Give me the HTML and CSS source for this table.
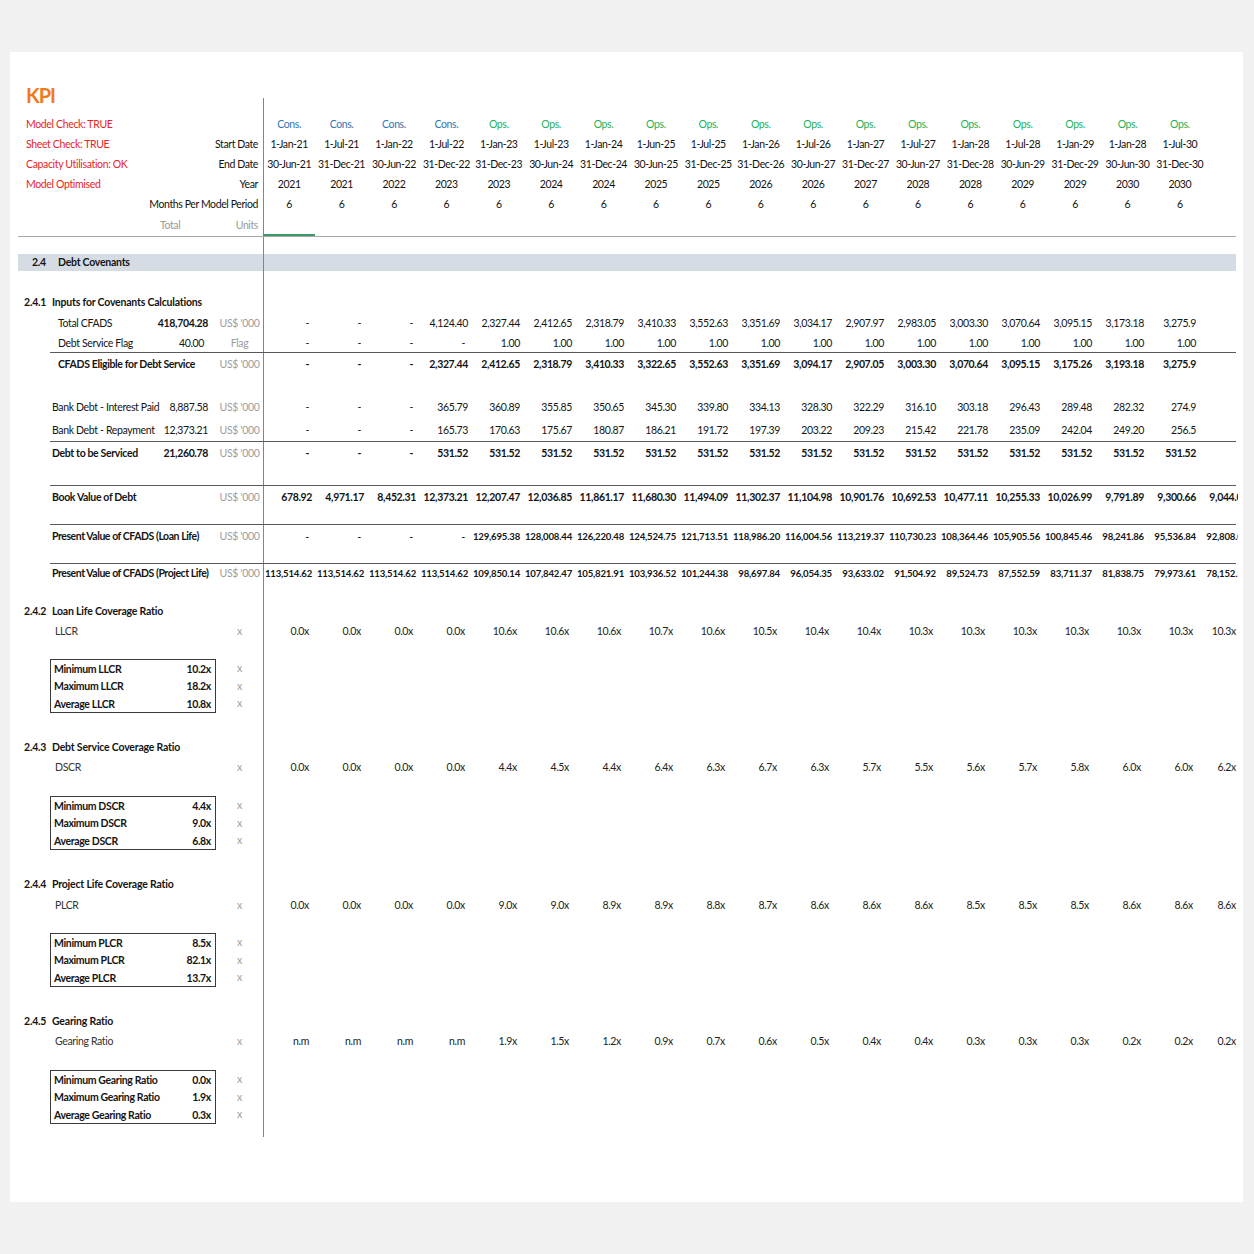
FILE: index.html
```html
<!DOCTYPE html>
<html>
<head>
<meta charset="utf-8">
<title>KPI</title>
<link rel="stylesheet" href="styles.css">
</head>
<body>
<div class="panel">
<div class="sheet">

<div class="title">KPI</div>

<div class="hrow">
  <div class="hleft"><span class="chk">Model Check: TRUE</span><span></span></div>
  <div class="hc c">Cons.</div><div class="hc c">Cons.</div><div class="hc c">Cons.</div><div class="hc c">Cons.</div>
  <div class="hc o">Ops.</div><div class="hc o">Ops.</div><div class="hc o">Ops.</div><div class="hc o">Ops.</div><div class="hc o">Ops.</div><div class="hc o">Ops.</div><div class="hc o">Ops.</div>
  <div class="hc o">Ops.</div><div class="hc o">Ops.</div><div class="hc o">Ops.</div><div class="hc o">Ops.</div><div class="hc o">Ops.</div><div class="hc o">Ops.</div><div class="hc o">Ops.</div>
</div>
<div class="hrow">
  <div class="hleft"><span class="chk">Sheet Check: TRUE</span><span>Start Date</span></div>
  <div class="hc">1-Jan-21</div><div class="hc">1-Jul-21</div><div class="hc">1-Jan-22</div><div class="hc">1-Jul-22</div>
  <div class="hc">1-Jan-23</div><div class="hc">1-Jul-23</div><div class="hc">1-Jan-24</div><div class="hc">1-Jun-25</div><div class="hc">1-Jul-25</div><div class="hc">1-Jan-26</div><div class="hc">1-Jul-26</div>
  <div class="hc">1-Jan-27</div><div class="hc">1-Jul-27</div><div class="hc">1-Jan-28</div><div class="hc">1-Jul-28</div><div class="hc">1-Jan-29</div><div class="hc">1-Jan-28</div><div class="hc">1-Jul-30</div>
</div>
<div class="hrow">
  <div class="hleft"><span class="chk">Capacity Utilisation: OK</span><span>End Date</span></div>
  <div class="hc">30-Jun-21</div><div class="hc">31-Dec-21</div><div class="hc">30-Jun-22</div><div class="hc">31-Dec-22</div>
  <div class="hc">31-Dec-23</div><div class="hc">30-Jun-24</div><div class="hc">31-Dec-24</div><div class="hc">30-Jun-25</div><div class="hc">31-Dec-25</div><div class="hc">31-Dec-26</div><div class="hc">30-Jun-27</div>
  <div class="hc">31-Dec-27</div><div class="hc">30-Jun-27</div><div class="hc">31-Dec-28</div><div class="hc">30-Jun-29</div><div class="hc">31-Dec-29</div><div class="hc">30-Jun-30</div><div class="hc">31-Dec-30</div>
</div>
<div class="hrow">
  <div class="hleft"><span class="chk">Model Optimised</span><span>Year</span></div>
  <div class="hc">2021</div><div class="hc">2021</div><div class="hc">2022</div><div class="hc">2023</div>
  <div class="hc">2023</div><div class="hc">2024</div><div class="hc">2024</div><div class="hc">2025</div><div class="hc">2025</div><div class="hc">2026</div><div class="hc">2026</div>
  <div class="hc">2027</div><div class="hc">2028</div><div class="hc">2028</div><div class="hc">2029</div><div class="hc">2029</div><div class="hc">2030</div><div class="hc">2030</div>
</div>
<div class="hrow">
  <div class="hleft"><span></span><span>Months Per Model Period</span></div>
  <div class="hc">6</div><div class="hc">6</div><div class="hc">6</div><div class="hc">6</div><div class="hc">6</div><div class="hc">6</div><div class="hc">6</div><div class="hc">6</div><div class="hc">6</div>
  <div class="hc">6</div><div class="hc">6</div><div class="hc">6</div><div class="hc">6</div><div class="hc">6</div><div class="hc">6</div><div class="hc">6</div><div class="hc">6</div><div class="hc">6</div>
</div>
<div class="hrow tu">
  <div class="hleft"><span class="tl">Total</span><span class="ul">Units</span></div>
  <div class="hc first"></div>
</div>
<div class="rule top"></div>

<div class="h17"></div>
<div class="bar"><span class="num">2.4</span>Debt Covenants</div>
<div class="h20"></div>

<div class="head h21"><span class="num">2.4.1</span>Inputs for Covenants Calculations</div>

<div class="row h21">
  <div class="lab in">Total CFADS</div><div class="tot b">418,704.28</div><div class="u">US$ '000</div>
  <div class="v d">-</div><div class="v d">-</div><div class="v d">-</div>
  <div class="v">4,124.40</div><div class="v">2,327.44</div><div class="v">2,412.65</div><div class="v">2,318.79</div><div class="v">3,410.33</div><div class="v">3,552.63</div><div class="v">3,351.69</div><div class="v">3,034.17</div>
  <div class="v">2,907.97</div><div class="v">2,983.05</div><div class="v">3,003.30</div><div class="v">3,070.64</div><div class="v">3,095.15</div><div class="v">3,173.18</div><div class="v">3,275.9</div>
</div>
<div class="row h19">
  <div class="lab in">Debt Service Flag</div><div class="tot t2">40.00</div><div class="u">Flag</div>
  <div class="v d">-</div><div class="v d">-</div><div class="v d">-</div><div class="v d">-</div>
  <div class="v">1.00</div><div class="v">1.00</div><div class="v">1.00</div><div class="v">1.00</div><div class="v">1.00</div><div class="v">1.00</div><div class="v">1.00</div>
  <div class="v">1.00</div><div class="v">1.00</div><div class="v">1.00</div><div class="v">1.00</div><div class="v">1.00</div><div class="v">1.00</div><div class="v">1.00</div>
</div>
<div class="rule"></div>
<div class="row h22 b">
  <div class="lab in">CFADS Eligible for Debt Service</div><div class="tot"></div><div class="u">US$ '000</div>
  <div class="v d">-</div><div class="v d">-</div><div class="v d">-</div>
  <div class="v">2,327.44</div><div class="v">2,412.65</div><div class="v">2,318.79</div><div class="v">3,410.33</div><div class="v">3,322.65</div><div class="v">3,552.63</div><div class="v">3,351.69</div><div class="v">3,094.17</div>
  <div class="v">2,907.05</div><div class="v">3,003.30</div><div class="v">3,070.64</div><div class="v">3,095.15</div><div class="v">3,175.26</div><div class="v">3,193.18</div><div class="v">3,275.9</div>
</div>

<div class="h21"></div>

<div class="row h22">
  <div class="lab">Bank Debt - Interest Paid</div><div class="tot">8,887.58</div><div class="u">US$ '000</div>
  <div class="v d">-</div><div class="v d">-</div><div class="v d">-</div>
  <div class="v">365.79</div><div class="v">360.89</div><div class="v">355.85</div><div class="v">350.65</div><div class="v">345.30</div><div class="v">339.80</div><div class="v">334.13</div><div class="v">328.30</div>
  <div class="v">322.29</div><div class="v">316.10</div><div class="v">303.18</div><div class="v">296.43</div><div class="v">289.48</div><div class="v">282.32</div><div class="v">274.9</div>
</div>
<div class="row h23">
  <div class="lab">Bank Debt - Repayment</div><div class="tot">12,373.21</div><div class="u">US$ '000</div>
  <div class="v d">-</div><div class="v d">-</div><div class="v d">-</div>
  <div class="v">165.73</div><div class="v">170.63</div><div class="v">175.67</div><div class="v">180.87</div><div class="v">186.21</div><div class="v">191.72</div><div class="v">197.39</div><div class="v">203.22</div>
  <div class="v">209.23</div><div class="v">215.42</div><div class="v">221.78</div><div class="v">235.09</div><div class="v">242.04</div><div class="v">249.20</div><div class="v">256.5</div>
</div>
<div class="rule"></div>
<div class="row h22 b">
  <div class="lab">Debt to be Serviced</div><div class="tot">21,260.78</div><div class="u">US$ '000</div>
  <div class="v d">-</div><div class="v d">-</div><div class="v d">-</div>
  <div class="v">531.52</div><div class="v">531.52</div><div class="v">531.52</div><div class="v">531.52</div><div class="v">531.52</div><div class="v">531.52</div><div class="v">531.52</div><div class="v">531.52</div>
  <div class="v">531.52</div><div class="v">531.52</div><div class="v">531.52</div><div class="v">531.52</div><div class="v">531.52</div><div class="v">531.52</div><div class="v">531.52</div>
</div>

<div class="h21"></div>
<div class="rule"></div>
<div class="row h22 b">
  <div class="lab">Book Value of Debt</div><div class="tot"></div><div class="u">US$ '000</div>
  <div class="v">678.92</div><div class="v">4,971.17</div><div class="v">8,452.31</div><div class="v">12,373.21</div><div class="v">12,207.47</div><div class="v">12,036.85</div><div class="v">11,861.17</div><div class="v">11,680.30</div><div class="v">11,494.09</div><div class="v">11,302.37</div>
  <div class="v">11,104.98</div><div class="v">10,901.76</div><div class="v">10,692.53</div><div class="v">10,477.11</div><div class="v">10,255.33</div><div class="v">10,026.99</div><div class="v">9,791.89</div><div class="v">9,300.66</div><div class="v">9,044.04</div>
</div>

<div class="h16"></div>
<div class="rule"></div>
<div class="row h22 b sm">
  <div class="lab">Present Value of CFADS (Loan Life)</div><div class="tot"></div><div class="u">US$ '000</div>
  <div class="v d">-</div><div class="v d">-</div><div class="v d">-</div><div class="v d">-</div>
  <div class="v">129,695.38</div><div class="v">128,008.44</div><div class="v">126,220.48</div><div class="v">124,524.75</div><div class="v">121,713.51</div><div class="v">118,986.20</div><div class="v">116,004.56</div><div class="v">113,219.37</div>
  <div class="v">110,730.23</div><div class="v">108,364.46</div><div class="v">105,905.56</div><div class="v">100,845.46</div><div class="v">98,241.86</div><div class="v">95,536.84</div><div class="v">92,808.07</div>
</div>

<div class="h16"></div>
<div class="rule"></div>
<div class="row h18 b sm">
  <div class="lab">Present Value of CFADS (Project Life)</div><div class="tot"></div><div class="u">US$ '000</div>
  <div class="v">113,514.62</div><div class="v">113,514.62</div><div class="v">113,514.62</div><div class="v">113,514.62</div>
  <div class="v">109,850.14</div><div class="v">107,842.47</div><div class="v">105,821.91</div><div class="v">103,936.52</div><div class="v">101,244.38</div><div class="v">98,697.84</div><div class="v">96,054.35</div><div class="v">93,633.02</div>
  <div class="v">91,504.92</div><div class="v">89,524.73</div><div class="v">87,552.59</div><div class="v">83,711.37</div><div class="v">81,838.75</div><div class="v">79,973.61</div><div class="v">78,152.59</div>
</div>

<div class="h19"></div>

<div class="head h20"><span class="num">2.4.2</span>Loan Life Coverage Ratio</div>
<div class="row h20 rt">
  <div class="lab r">LLCR</div><div class="tot"></div><div class="u">x</div>
  <div class="v">0.0x</div><div class="v">0.0x</div><div class="v">0.0x</div><div class="v">0.0x</div><div class="v">10.6x</div><div class="v">10.6x</div><div class="v">10.6x</div><div class="v">10.7x</div><div class="v">10.6x</div><div class="v">10.5x</div>
  <div class="v">10.4x</div><div class="v">10.4x</div><div class="v">10.3x</div><div class="v">10.3x</div><div class="v">10.3x</div><div class="v">10.3x</div><div class="v">10.3x</div><div class="v">10.3x</div><div class="v">10.3x</div>
</div>
<div class="h18"></div>
<div class="boxrow">
  <div class="box">
    <div><span>Minimum LLCR</span><span>10.2x</span></div>
    <div class="mid"><span>Maximum LLCR</span><span>18.2x</span></div>
    <div><span>Average LLCR</span><span>10.8x</span></div>
  </div>
  <div class="ux"><div>x</div><div class="mid">x</div><div>x</div></div>
</div>
<div class="h24"></div>

<div class="head h20"><span class="num">2.4.3</span>Debt Service Coverage Ratio</div>
<div class="row h20 rt">
  <div class="lab r">DSCR</div><div class="tot"></div><div class="u">x</div>
  <div class="v">0.0x</div><div class="v">0.0x</div><div class="v">0.0x</div><div class="v">0.0x</div><div class="v">4.4x</div><div class="v">4.5x</div><div class="v">4.4x</div><div class="v">6.4x</div><div class="v">6.3x</div><div class="v">6.7x</div>
  <div class="v">6.3x</div><div class="v">5.7x</div><div class="v">5.5x</div><div class="v">5.6x</div><div class="v">5.7x</div><div class="v">5.8x</div><div class="v">6.0x</div><div class="v">6.0x</div><div class="v">6.2x</div>
</div>
<div class="h19"></div>
<div class="boxrow">
  <div class="box">
    <div><span>Minimum DSCR</span><span>4.4x</span></div>
    <div class="mid"><span>Maximum DSCR</span><span>9.0x</span></div>
    <div><span>Average DSCR</span><span>6.8x</span></div>
  </div>
  <div class="ux"><div>x</div><div class="mid">x</div><div>x</div></div>
</div>
<div class="h24"></div>

<div class="head h20"><span class="num">2.4.4</span>Project Life Coverage Ratio</div>
<div class="row h21 rt">
  <div class="lab r">PLCR</div><div class="tot"></div><div class="u">x</div>
  <div class="v">0.0x</div><div class="v">0.0x</div><div class="v">0.0x</div><div class="v">0.0x</div><div class="v">9.0x</div><div class="v">9.0x</div><div class="v">8.9x</div><div class="v">8.9x</div><div class="v">8.8x</div><div class="v">8.7x</div>
  <div class="v">8.6x</div><div class="v">8.6x</div><div class="v">8.6x</div><div class="v">8.5x</div><div class="v">8.5x</div><div class="v">8.5x</div><div class="v">8.6x</div><div class="v">8.6x</div><div class="v">8.6x</div>
</div>
<div class="h18"></div>
<div class="boxrow">
  <div class="box">
    <div><span>Minimum PLCR</span><span>8.5x</span></div>
    <div class="mid"><span>Maximum PLCR</span><span>82.1x</span></div>
    <div><span>Average PLCR</span><span>13.7x</span></div>
  </div>
  <div class="ux"><div>x</div><div class="mid">x</div><div>x</div></div>
</div>
<div class="h24"></div>

<div class="head h20"><span class="num">2.4.5</span>Gearing Ratio</div>
<div class="row h20 rt">
  <div class="lab r">Gearing Ratio</div><div class="tot"></div><div class="u">x</div>
  <div class="v">n.m</div><div class="v">n.m</div><div class="v">n.m</div><div class="v">n.m</div><div class="v">1.9x</div><div class="v">1.5x</div><div class="v">1.2x</div><div class="v">0.9x</div><div class="v">0.7x</div><div class="v">0.6x</div>
  <div class="v">0.5x</div><div class="v">0.4x</div><div class="v">0.4x</div><div class="v">0.3x</div><div class="v">0.3x</div><div class="v">0.3x</div><div class="v">0.2x</div><div class="v">0.2x</div><div class="v">0.2x</div>
</div>
<div class="h19"></div>
<div class="boxrow">
  <div class="box">
    <div><span>Minimum Gearing Ratio</span><span>0.0x</span></div>
    <div class="mid"><span>Maximum Gearing Ratio</span><span>1.9x</span></div>
    <div><span>Average Gearing Ratio</span><span>0.3x</span></div>
  </div>
  <div class="ux"><div>x</div><div class="mid">x</div><div>x</div></div>
</div>
<div class="h13"></div>

</div>
</div>
</body>
</html>
```

FILE: styles.css
```css
* { box-sizing: border-box; margin: 0; padding: 0; }

html, body { height: 100%; }

body {
  background: #f1f1f1;
  font-family: "Lato", "Open Sans", sans-serif;
  color: #141414;
  overflow: hidden;
}

.panel {
  margin: 52px 0 0 10px;
  width: 1233px;
  height: 1150px;
  background: #ffffff;
}

.sheet {
  width: 1228px;
  overflow: hidden;
  padding-top: 30px;
  background: linear-gradient(#858585, #858585) no-repeat 253px 46px / 1px calc(100% - 46px);
}

/* spacer / height helpers */
.h13 { height: 13px; }
.h16 { height: 16px; }
.h17 { height: 17px; }
.h18 { height: 18px; }
.h19 { height: 19px; }
.h20 { height: 20px; }
.h21 { height: 21px; }
.h22 { height: 22px; }
.h23 { height: 23px; }
.h24 { height: 24px; }

.title {
  height: 32px;
  line-height: 26px;
  padding-left: 16px;
  font-size: 20px;
  font-weight: bold;
  letter-spacing: -1px;
  color: #f07b1c;
}

/* header rows */
.hrow {
  display: grid;
  grid-template-columns: 253px repeat(18, 52.4px);
  height: 20px;
  align-items: center;
  font-size: 10.5px;
  letter-spacing: -0.4px;
  white-space: nowrap;
  color: #111;
}
.hleft {
  display: flex;
  justify-content: space-between;
  padding: 0 5px 0 16px;
}
.chk { color: #e8231f; letter-spacing: -0.35px; }
.hc { text-align: center; }
.hc.c { color: #2f76b3; }
.hc.o { color: #22b35a; }

.hrow.tu { height: 22px; color: #9a9a9a; align-items: stretch; }
.tu .hleft { justify-content: flex-start; align-items: center; }
.tu .tl { margin-left: 134px; }
.tu .ul { margin-left: auto; }
.tu .first { box-shadow: inset 0 -2px 0 #3b9866; }

.rule {
  height: 1px;
  margin: 0 2px 0 40px;
  background: #5a5a5a;
}
.rule.top {
  margin-left: 8px;
  background: #a8a8a8;
}

.bar {
  height: 17px;
  line-height: 17px;
  margin: 0 2px 0 8px;
  padding-left: 14px;
  font-size: 10.5px;
  font-weight: bold;
  letter-spacing: -0.25px;
  background: linear-gradient(#858585, #858585) no-repeat 245px 0 / 1px 100%, #d6dce4;
}
.bar .num { display: inline-block; width: 26px; }

.head {
  display: flex;
  align-items: center;
  padding-left: 14px;
  font-size: 10.5px;
  font-weight: bold;
  letter-spacing: -0.2px;
  white-space: nowrap;
}
.head .num { display: inline-block; width: 28px; flex: none; }

/* data rows */
.row {
  display: grid;
  grid-template-columns: 132px 66px 47px repeat(18, 52px) 52px;
  padding-left: 8px;
  align-items: center;
  font-size: 10.5px;
  letter-spacing: -0.35px;
  white-space: nowrap;
}
.b { font-weight: bold; }
.lab { padding-left: 34px; }
.lab.in { padding-left: 40px; }
.lab.r { padding-left: 37px; color: #333; }
.tot { text-align: right; padding-right: 8px; }
.tot.t2 { padding-right: 12px; }
.u { text-align: center; color: #9d9d9d; font-weight: normal; }
.v { text-align: right; padding-right: 3px; }
.v.d { padding-right: 6px; }
.sm .v { font-size: 9.6px; letter-spacing: -0.2px; }
.sm .lab { letter-spacing: -0.45px; }

.rt .v { padding-right: 6px; color: #222; }
.rt .v:last-child { padding-right: 15px; }

/* summary boxes */
.boxrow {
  display: grid;
  grid-template-columns: 40px 166px 47px;
  height: 54px;
  font-size: 10.5px;
  letter-spacing: -0.35px;
}
.box {
  grid-column: 2;
  border: 1px solid #3a3a3a;
  font-weight: bold;
  padding: 0 4px 0 3px;
}
.box > div {
  display: flex;
  justify-content: space-between;
  align-items: center;
  height: 17px;
}
.box > div.mid { height: 18px; }
.ux {
  padding-top: 1px;
  color: #9d9d9d;
  text-align: center;
}
.ux > div { height: 17px; line-height: 17px; }
.ux > div.mid { height: 18px; line-height: 18px; }
```
